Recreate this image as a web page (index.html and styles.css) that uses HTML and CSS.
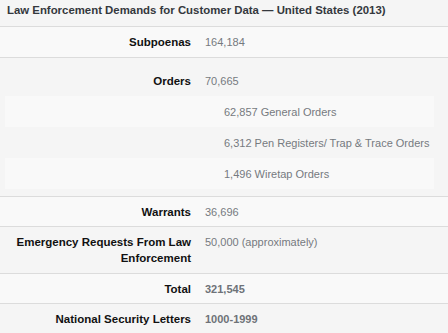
FILE: index.html
```html
<!DOCTYPE html>
<html lang="en">
<head>
<meta charset="utf-8">
<title>Law Enforcement Demands</title>
<link rel="stylesheet" href="styles.css">
</head>
<body>
<div class="panel">
  <div class="title">Law Enforcement Demands for Customer Data — United States (2013)</div>
  <div class="row odd">
    <div class="label">Subpoenas</div>
    <div class="value">164,184</div>
  </div>
  <div class="row group">
    <div class="label">Orders</div>
    <div class="value">70,665</div>
    <div class="sub">
      <div class="sub-row odd">62,857 General Orders</div>
      <div class="sub-row">6,312 Pen Registers/ Trap &amp; Trace Orders</div>
      <div class="sub-row odd">1,496 Wiretap Orders</div>
    </div>
  </div>
  <div class="row odd">
    <div class="label">Warrants</div>
    <div class="value">36,696</div>
  </div>
  <div class="row">
    <div class="label">Emergency Requests From Law Enforcement</div>
    <div class="value">50,000 (approximately)</div>
  </div>
  <div class="row odd">
    <div class="label">Total</div>
    <div class="value strong">321,545</div>
  </div>
  <div class="row last">
    <div class="label">National Security Letters</div>
    <div class="value strong">1000-1999</div>
  </div>
</div>
</body>
</html>
```
FILE: styles.css
```css
html, body {
  margin: 0;
  padding: 0;
  background: #f5f5f5;
}
body {
  font-family: "Liberation Sans", Arial, sans-serif;
  font-size: 11px;
  line-height: 16px;
  color: #767a80;
}
.panel {
  width: 448px;
}
.title {
  padding: 2px 7px 8px;
  font-size: 11.4px;
  font-weight: bold;
  color: #34383d;
  border-bottom: 1px solid #dcdcdc;
}
.row {
  display: grid;
  grid-template-columns: 197px 1fr;
  padding: 7px 0 6.5px;
  border-bottom: 1px solid #dcdcdc;
  background: #f5f5f5;
}
.row.odd {
  background: #f9f9f9;
}
.row.group {
  padding-top: 15px;
  padding-bottom: 7px;
}
.row.last {
  border-bottom: none;
}
.label {
  padding: 0 6px 0 7px;
  text-align: right;
  font-weight: bold;
  font-size: 11.5px;
  color: #111;
}
.value {
  padding-left: 8px;
}
.value.strong {
  font-weight: bold;
  color: #6e7278;
}
.sub {
  grid-column: 1 / -1;
  margin: 7px 14px 0 5px;
}
.sub-row {
  padding: 8.5px 0 6.5px 219px;
}
.sub-row.odd {
  background: #f9f9f9;
}
```
